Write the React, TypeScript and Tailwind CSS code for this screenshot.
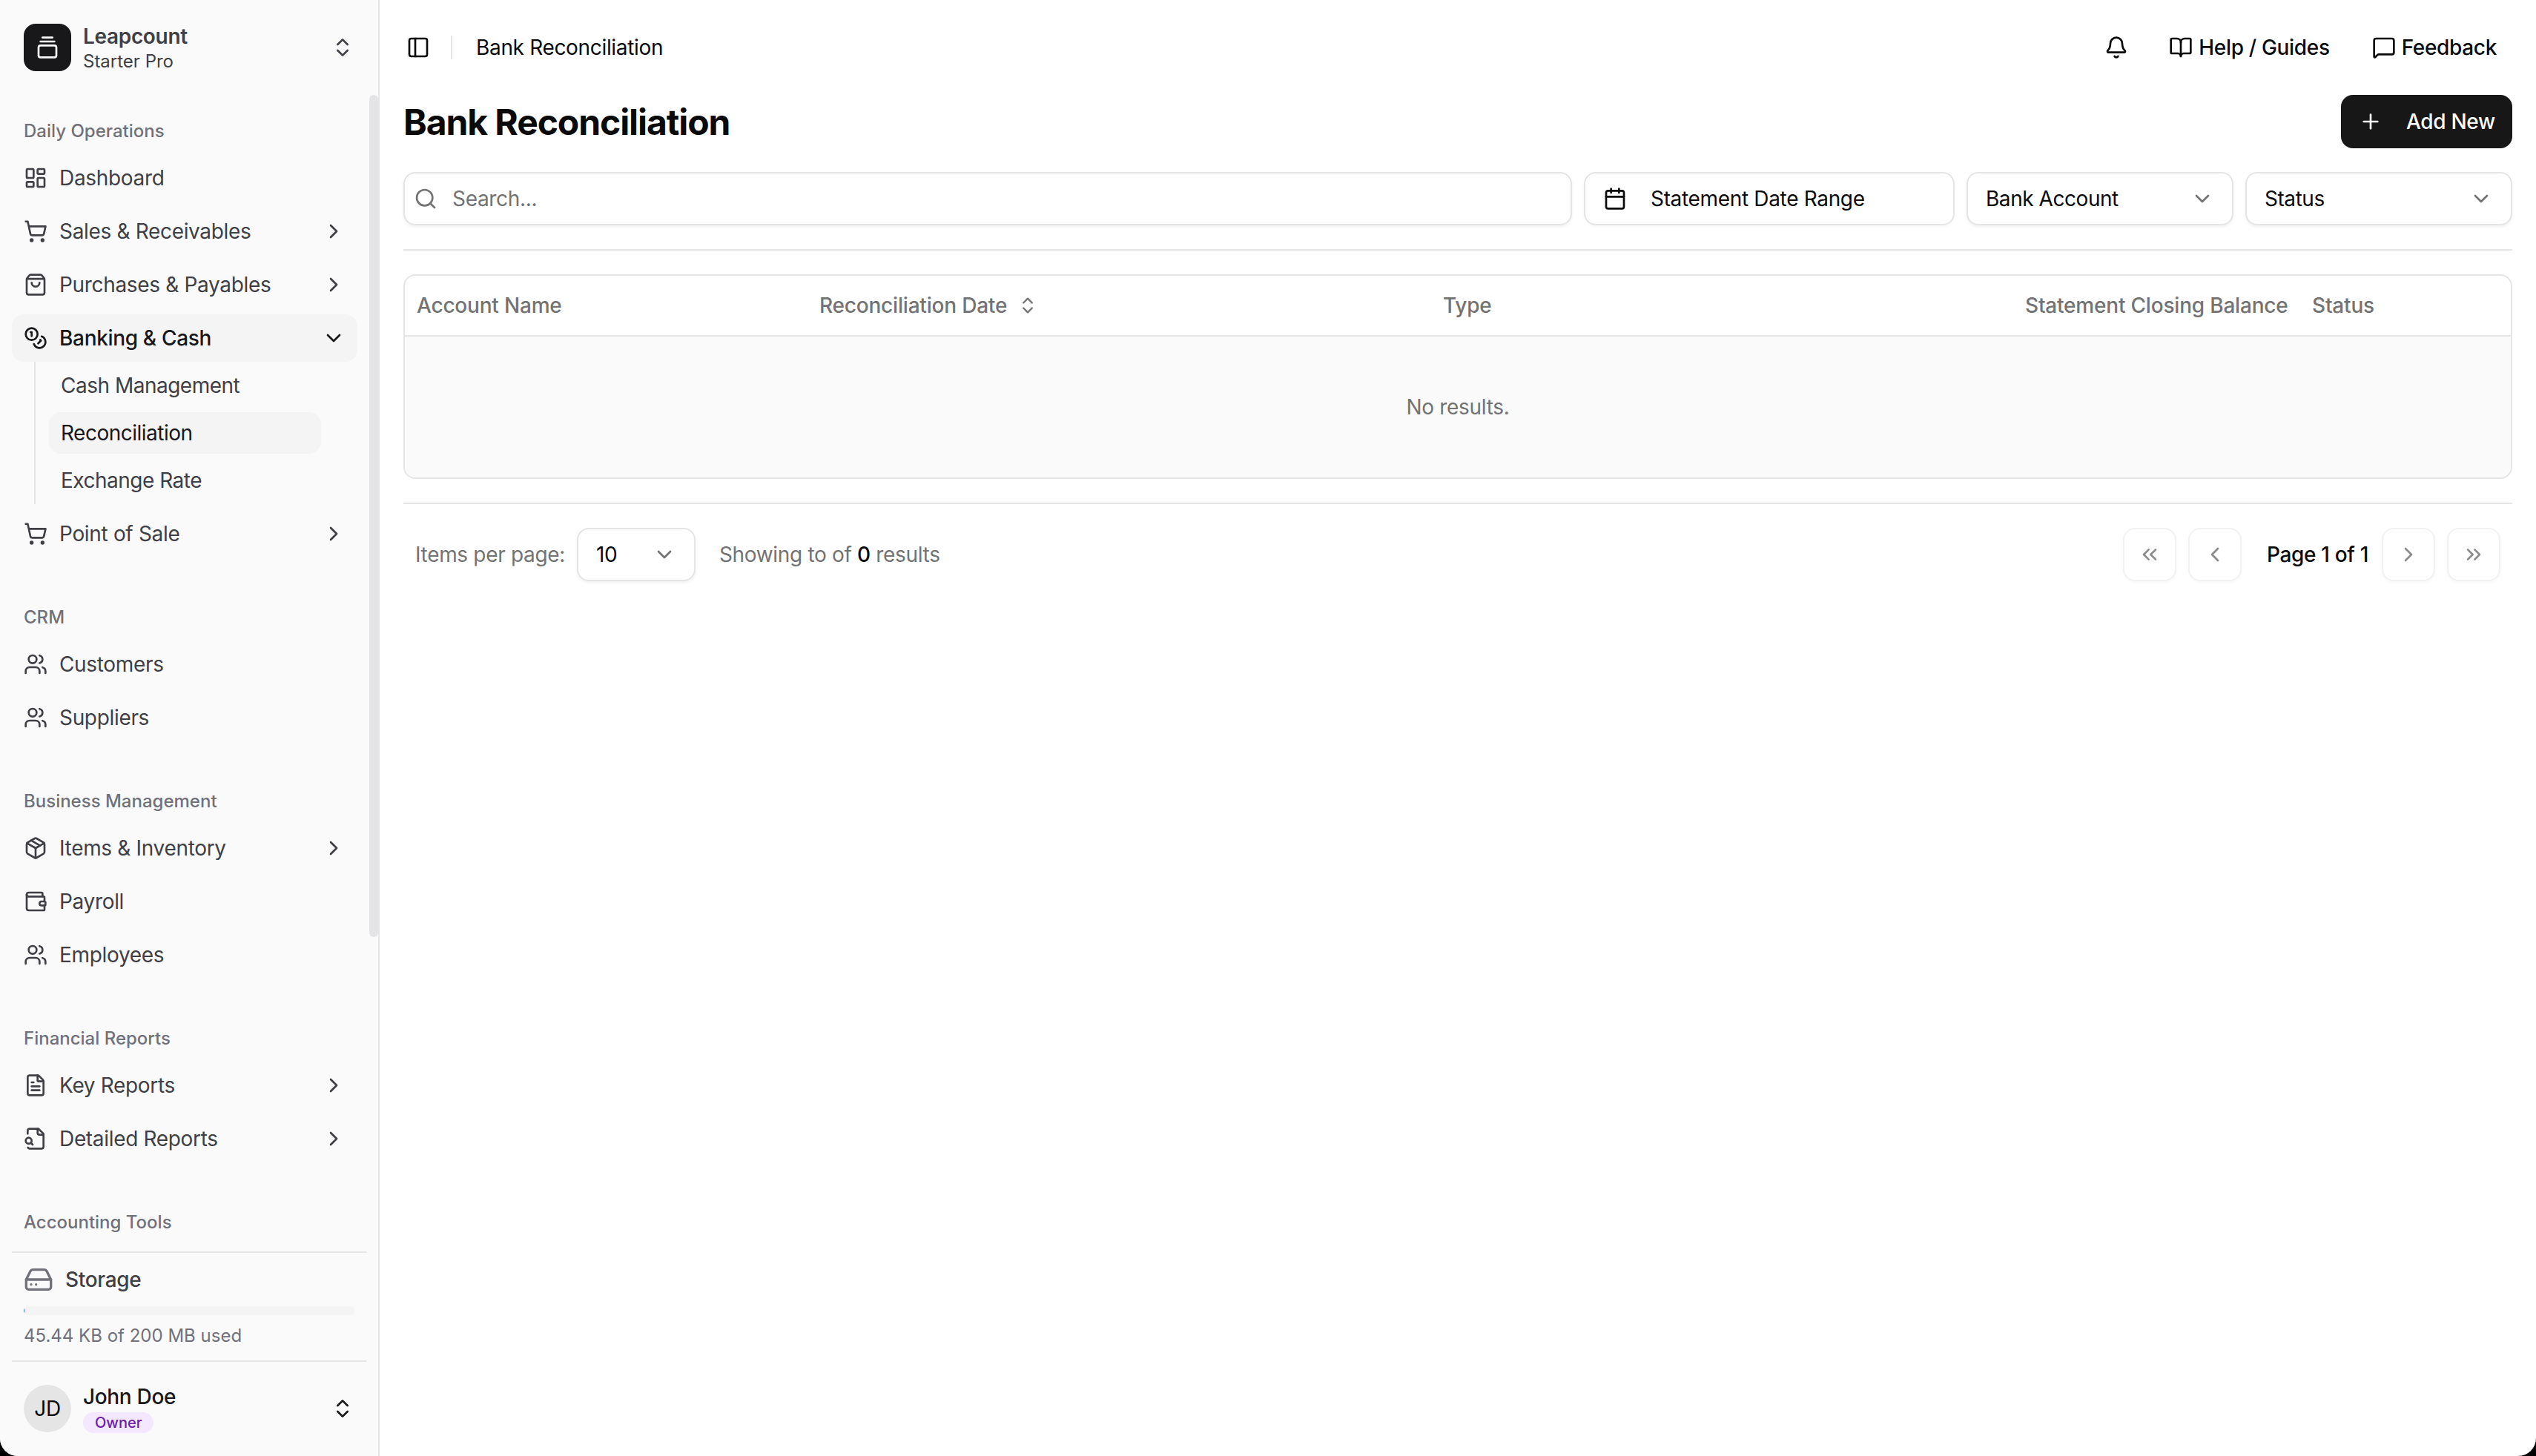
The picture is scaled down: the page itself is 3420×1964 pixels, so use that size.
import {
  Bell,
  BookOpen,
  Calendar,
  ChevronDown,
  ChevronLeft,
  ChevronRight,
  ChevronsLeft,
  ChevronsRight,
  ChevronsUpDown,
  Coins,
  FileText,
  GalleryVerticalEnd,
  HardDrive,
  LayoutDashboard,
  MessageSquare,
  Package,
  PanelLeft,
  Plus,
  Search,
  ShoppingBag,
  ShoppingCart,
  Users,
  Wallet,
} from "lucide-react";
import type { ComponentType, ReactNode } from "react";

type IconType = ComponentType<{ size?: number; className?: string }>;

// file with the lens sitting on its bottom-left corner
const FileLens = ({ size = 32, className }: { size?: number; className?: string }) => (
  <svg
    width={size}
    height={size}
    viewBox="0 0 24 24"
    fill="none"
    stroke="currentColor"
    strokeWidth="2"
    strokeLinecap="round"
    strokeLinejoin="round"
    className={className}
  >
    <path d="M4.268 21a2 2 0 0 0 1.727 1H18a2 2 0 0 0 2-2V7l-5-5H6a2 2 0 0 0-2 2v3" />
    <path d="M14 2v4a2 2 0 0 0 2 2h4" />
    <path d="m9 18-1.5-1.5" />
    <circle cx="5" cy="14" r="3" />
  </svg>
);

const NavItem = ({
  icon: Icon,
  label,
  more,
}: {
  icon: IconType;
  label: string;
  more?: boolean;
}) => (
  <div className="flex h-16 items-center gap-4 rounded-[16px] px-4 text-[28px] text-[#3f3f46]">
    <Icon size={32} className="shrink-0" />
    <span className="flex-1">{label}</span>
    {more && <ChevronRight size={32} className="shrink-0" />}
  </div>
);

const NavGroup = ({ title, children }: { title: string; children: ReactNode }) => (
  <div className="flex flex-col">
    <div className="flex h-16 items-center px-4 pt-[2px] text-[24px] font-medium tracking-normal text-[#71717a]">
      {title}
    </div>
    <div className="flex flex-col gap-2">{children}</div>
  </div>
);

const Sidebar = () => (
  <aside className="relative flex h-full w-[512px] shrink-0 flex-col border-r-2 border-[#e5e5e5] bg-[#fafafa]">
    <div className="flex h-[128px] shrink-0 items-center gap-4 pl-8 pr-8">
      <div className="flex size-16 items-center justify-center rounded-[16px] bg-[#18181b] text-[#fafafa]">
        <GalleryVerticalEnd size={32} />
      </div>
      <div className="flex flex-1 flex-col pt-[2px] text-[#3f3f46]">
        <span className="text-[28px] leading-[36px] font-semibold">Leapcount</span>
        <span className="text-[24px] leading-[32px] tracking-normal">Starter Pro</span>
      </div>
      <ChevronsUpDown size={32} className="text-[#3f3f46]" />
    </div>

    <div className="absolute right-0 top-[128px] h-[1136px] w-3 rounded-[12px] bg-[#e4e4e7]" />

    <nav className="flex flex-1 flex-col gap-12 overflow-hidden pl-4 pr-[28px] pt-4">
      <NavGroup title="Daily Operations">
        <NavItem icon={LayoutDashboard} label="Dashboard" />
        <NavItem icon={ShoppingCart} label="Sales & Receivables" more />
        <NavItem icon={ShoppingBag} label="Purchases & Payables" more />
        <div className="flex h-16 items-center gap-4 rounded-[16px] bg-[#f4f4f5] px-4 text-[28px] font-medium text-[#18181b]">
          <Coins size={32} className="shrink-0" />
          <span className="flex-1">Banking & Cash</span>
          <ChevronDown size={32} className="shrink-0" />
        </div>
        <div className="-mt-2 ml-[30px] flex w-[387px] flex-col gap-2 border-l-2 border-[#e5e5e5] py-1 pl-[18px] text-[28px] tracking-[-0.5px] text-[#3f3f46]">
          <div className="flex h-14 items-center rounded-[16px] px-4">Cash Management</div>
          <div className="flex h-14 items-center rounded-[16px] bg-[#f4f4f5] px-4 text-[#18181b]">
            Reconciliation
          </div>
          <div className="flex h-14 items-center rounded-[16px] px-4">Exchange Rate</div>
        </div>
        <NavItem icon={ShoppingCart} label="Point of Sale" more />
      </NavGroup>
      <NavGroup title="CRM">
        <NavItem icon={Users} label="Customers" />
        <NavItem icon={Users} label="Suppliers" />
      </NavGroup>
      <NavGroup title="Business Management">
        <NavItem icon={Package} label="Items & Inventory" more />
        <NavItem icon={Wallet} label="Payroll" />
        <NavItem icon={Users} label="Employees" />
      </NavGroup>
      <NavGroup title="Financial Reports">
        <NavItem icon={FileText} label="Key Reports" more />
        <NavItem icon={FileLens} label="Detailed Reports" more />
      </NavGroup>
      <NavGroup title="Accounting Tools">
        <div />
      </NavGroup>
    </nav>

    <div className="mx-4 flex h-[147px] shrink-0 flex-col border-t-2 border-[#e5e5e5] px-4 pt-4">
      <div className="flex h-10 items-center gap-4 text-[28px] font-medium text-[#3f3f46]">
        <HardDrive size={40} className="text-[#71717a]" />
        Storage
      </div>
      <div className="mt-4 h-3 w-[446px] overflow-hidden rounded-full bg-[#f4f4f5]">
        <div className="h-full w-[1px] bg-[#2563eb]" />
      </div>
      <div className="mt-3 text-[24px] leading-[32px] tracking-normal text-[#71717a]">
        45.44 KB of 200 MB used
      </div>
    </div>

    <div className="mx-4 flex h-[129px] shrink-0 items-start gap-4 border-t-2 border-[#e5e5e5] px-4 pt-[31px]">
      <div className="flex size-16 items-center justify-center rounded-full bg-[#e5e5e5] text-[28px] text-[#0a0a0a]">
        JD
      </div>
      <div className="flex flex-1 flex-col items-start">
        <span className="text-[28px] leading-[32px] font-medium text-[#18181b]">John Doe</span>
        <span className="mt-[5px] flex h-7 items-center rounded-full bg-[#f3e8ff] px-4 text-[20px] font-medium tracking-normal text-[#6b21a8]">
          Owner
        </span>
      </div>
      <ChevronsUpDown size={32} className="mt-4 text-[#18181b]" />
    </div>
  </aside>
);

const FilterSelect = ({ label }: { label: string }) => (
  <div className="flex h-[72px] w-[360px] items-center justify-between rounded-[16px] border-2 border-[#e5e5e5] bg-white px-6 text-[28px] tracking-[-0.45px] text-[#0a0a0a] shadow-[0_2px_4px_rgba(0,0,0,0.06)]">
    {label}
    <ChevronDown size={32} className="text-[#737373]" />
  </div>
);

const PageButton = ({ icon: Icon }: { icon: IconType }) => (
  <div className="flex size-[72px] items-center justify-center rounded-[16px] border-2 border-[#f2f2f2] bg-white text-[#8c8c8c] shadow-[0_2px_4px_rgba(0,0,0,0.03)]">
    <Icon size={32} />
  </div>
);

const App = () => {
  return (
    <div className="h-[1964px] w-[3420px] overflow-hidden bg-black tracking-[-0.33px] [font-family:Inter,sans-serif]">
      <div className="flex h-full w-full overflow-hidden rounded-b-[24px] bg-white">
        <Sidebar />
        <main className="flex min-w-0 flex-1 flex-col">
          <header className="flex h-[128px] shrink-0 items-center pl-6 pr-[53px]">
            <div className="flex size-14 items-center justify-center text-[#0a0a0a]">
              <PanelLeft size={32} />
            </div>
            <div className="ml-4 h-8 w-[2px] bg-[#e5e5e5]" />
            <span className="ml-8 text-[28px] text-[#0a0a0a]">Bank Reconciliation</span>
            <div className="ml-auto flex items-center text-[28px] font-medium text-[#0a0a0a]">
              <Bell size={32} className="mr-[55px]" />
              <span className="mr-[57px] flex items-center gap-2">
                <BookOpen size={32} />
                Help / Guides
              </span>
              <span className="flex items-center gap-2">
                <MessageSquare size={32} />
                Feedback
              </span>
            </div>
          </header>

          <div className="flex flex-col px-8">
            <div className="flex h-[72px] items-center justify-between">
              <h1 className="pt-[2px] text-[48px] font-bold tracking-[-0.0225em] text-[#0a0a0a]">
                Bank Reconciliation
              </h1>
              <div className="flex h-[72px] w-[231px] items-center gap-[32px] rounded-[16px] bg-[#171717] pl-[24px] text-[28px] font-medium text-[#fafafa]">
                <Plus size={32} />
                Add New
              </div>
            </div>

            <div className="mt-8 flex gap-4">
              <div className="flex h-[72px] flex-1 items-center gap-[20px] rounded-[16px] border-2 border-[#e5e5e5] bg-white pl-3 text-[28px] text-[#737373] shadow-[0_2px_4px_rgba(0,0,0,0.06)]">
                <Search size={32} />
                Search...
              </div>
              <div className="flex h-[72px] w-[500px] items-center gap-[32px] rounded-[16px] border-2 border-[#e5e5e5] bg-white pl-[24px] text-[28px] text-[#0a0a0a] shadow-[0_2px_4px_rgba(0,0,0,0.03)]">
                <Calendar size={32} />
                Statement Date Range
              </div>
              <FilterSelect label="Bank Account" />
              <FilterSelect label="Status" />
            </div>

            <div className="mt-8 h-[2px] bg-[#e5e5e5]" />

            <div className="mt-8 overflow-hidden rounded-[16px] border-2 border-[#e5e5e5]">
              <div className="grid h-[82px] grid-cols-[543px_841px_785px_387px_1fr] items-center border-b-2 border-[#e5e5e5] text-[28px] font-medium tracking-[-0.2px] text-[#737373]">
                <span className="pl-4">Account Name</span>
                <span className="flex items-center gap-[14px] pl-4">
                  Reconciliation Date
                  <ChevronsUpDown size={28} />
                </span>
                <span className="pl-4">Type</span>
                <span className="pl-4">Statement Closing Balance</span>
                <span className="pl-4">Status</span>
              </div>
              <div className="flex h-[190px] items-center justify-center bg-[#fafafa] text-[28px] text-[#737373]">
                No results.
              </div>
            </div>

            <div className="mt-8 h-[2px] bg-[#e5e5e5]" />

            <div className="mt-8 flex h-[72px] items-center px-4 text-[28px] text-[#737373]">
              <span>Items per page:</span>
              <div className="ml-4 flex h-[72px] w-[160px] items-center justify-between rounded-[16px] border-2 border-[#e5e5e5] bg-white px-6 text-[#0a0a0a] shadow-[0_2px_4px_rgba(0,0,0,0.06)]">
                10
                <ChevronDown size={32} className="text-[#737373]" />
              </div>
              <span className="ml-8">
                Showing to of <span className="font-medium text-[#0a0a0a]">0</span> results
              </span>
              <div className="ml-auto flex items-center gap-4">
                <PageButton icon={ChevronsLeft} />
                <PageButton icon={ChevronLeft} />
                <span className="ml-[18px] mr-[2px] font-medium text-[#0a0a0a]">Page 1 of 1</span>
                <PageButton icon={ChevronRight} />
                <PageButton icon={ChevronsRight} />
              </div>
            </div>
          </div>
        </main>
      </div>
    </div>
  );
};

export default App;
